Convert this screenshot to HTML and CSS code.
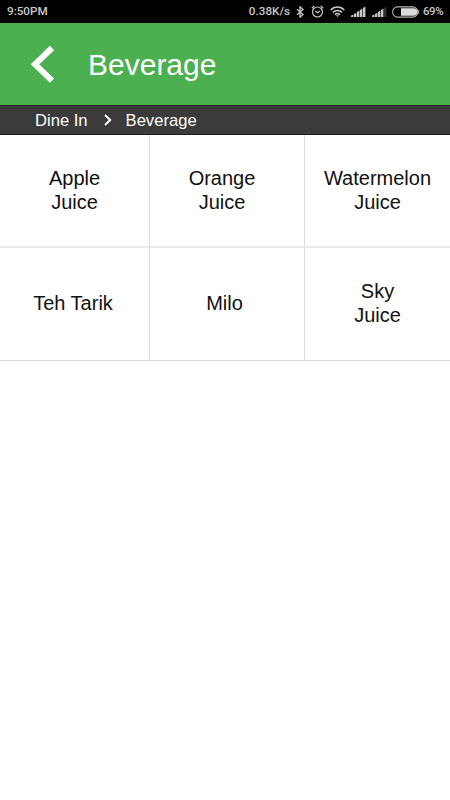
FILE: index.html
```
<!DOCTYPE html>
<html lang="en">

<head>
    <meta charset="UTF-8">
    <meta name="viewport" content="width=device-width, initial-scale=1.0">
    <title>Beverage</title>
    <link rel="stylesheet" href="styles.css">
</head>

<body>
    <!-- status bar -->
    <div class="status">
        <span class="time">9:50PM</span>
        <span class="speed">0.38K/s</span>
        <svg class="bluetooth" width="8" height="12" viewBox="0 0 8 12">
            <path d="M1 3.2L7 8.6L4 11.2V0.8L7 3.4L1 8.8" fill="none" stroke="#c8c8c8" stroke-width="1.3" />
        </svg>
        <svg class="alarm" width="13" height="13" viewBox="0 0 13 13" fill="none" stroke="#c8c8c8" stroke-width="1.2">
            <circle cx="6.5" cy="7" r="5" />
            <path d="M0.8 3.2L3.2 1M12.2 3.2L9.8 1M4.3 6L6.5 7.8L9 6" />
        </svg>
        <svg class="wifi" width="15" height="11" viewBox="0 0 15 11" fill="none" stroke="#c8c8c8" stroke-width="1.5">
            <path d="M0.7 4C4.5 0 10.5 0 14.3 4M2.9 6.4C5.5 3.8 9.5 3.8 12.1 6.4M5 8.6C6.5 7.2 8.5 7.2 10 8.6" />
            <path d="M6 9.3L7.5 11L9 9.3Z" fill="#c8c8c8" stroke="none" />
        </svg>
        <svg class="signal" width="15" height="11" viewBox="0 0 15 11" fill="#c8c8c8">
            <path d="M0 9.5L2.4 8.5V11H0zM3 8L5.4 6.8V11H3zM6 6L8.4 4.6V11H6zM9 4L11.4 2.6V11H9zM12 2L14.4 0.6V11H12z" />
        </svg>
        <svg class="signal" width="15" height="11" viewBox="0 0 15 11" fill="#c8c8c8">
            <path d="M0 9.5L2.4 8.5V11H0zM3 8L5.4 6.8V11H3zM6 6L8.4 4.6V11H6zM9 4L11.4 2.6V11H9z" />
            <path d="M12 2L14.4 0.6V11H12z" fill="#303030" />
        </svg>
        <svg class="battery" width="28" height="12" viewBox="0 0 28 12">
            <rect x="0.6" y="0.9" width="25.2" height="10.2" rx="5" fill="none" stroke="#b4b4b4" stroke-width="1.1" />
            <path d="M9 2.3H21.5A3.7 3.7 0 0 1 21.5 9.7H9Z" fill="#dcdcdc" />
            <path d="M26.7 4.2V7.8" stroke="#b4b4b4" stroke-width="1" />
        </svg>
        <span class="percent">69%</span>
    </div>

    <!-- title bar -->
    <div class="header">
        <svg class="back" width="24" height="38" viewBox="0 0 24 38">
            <path d="M21 3L4 19.3L21 35.6" fill="none" stroke="#fff" stroke-width="6" />
        </svg>
        <h1>Beverage</h1>
    </div>

    <div class="crumbs">
        <span>Dine In</span>
        <svg class="arrow" width="8" height="12" viewBox="0 0 8 12">
            <path d="M1 1L6.2 6L1 11" fill="none" stroke="#fff" stroke-width="2" />
        </svg>
        <span>Beverage</span>
    </div>

    <!-- menu items -->
    <div class="menu">
        <div class="item">Apple<br>Juice</div>
        <div class="item orange">Orange<br>Juice</div>
        <div class="item">Watermelon<br>Juice</div>
        <div class="item teh">Teh Tarik</div>
        <div class="item milo">Milo</div>
        <div class="item">Sky<br>Juice</div>
    </div>
</body>

</html>
```

FILE: styles.css
```
* {
    margin: 0;
    padding: 0;
    box-sizing: border-box;
}

body {
    background-color: #fff;
    font-family: "Liberation Sans", Arial, sans-serif;
}

.status {
    display: flex;
    align-items: center;
    height: 23px;
    padding: 0 7px;
    background-color: #000;
    color: #c8c8c8;
    font: 500 11.7px/23px Roboto, sans-serif;
}

.status svg {
    flex: none;
}

.time {
    margin-right: auto;
}

.bluetooth {
    margin-left: 6px;
}

.alarm {
    margin-left: 7px;
}

.wifi {
    margin-left: 6px;
}

.signal {
    margin-left: 6px;
}

.battery {
    margin-left: 5px;
}

.percent {
    width: 20px;
    margin-left: 3px;
    font-size: 11.4px;
    letter-spacing: -0.4px;
}

.header {
    display: flex;
    align-items: center;
    height: 82px;
    padding-left: 31px;
    background-color: #4caf50;
    color: #fff;
}

.header h1 {
    margin-left: 33px;
    padding-top: 2px;
    font-size: 30px;
    font-weight: normal;
}

.crumbs {
    display: flex;
    align-items: center;
    height: 30px;
    padding-left: 35px;
    background-color: #3b3b3b;
    border-top: 1px solid #1c1c1c;
    border-bottom: 1px solid #1c1c1c;
    color: #fff;
    font-size: 16.6px;
}

.crumbs span {
    padding-top: 1px;
}

.arrow {
    margin: 0 14px 0 16px;
}

.menu {
    display: grid;
    grid-template-columns: 150px 155px 145px;
    grid-template-rows: 113px 113px;
}

.item {
    display: flex;
    align-items: center;
    justify-content: center;
    padding-bottom: 2px;
    border-right: 1px solid #dedede;
    border-bottom: 2px solid #e9e9e9;
    color: #111;
    font-size: 20px;
    line-height: 24px;
    text-align: center;
}

.item:nth-child(3n) {
    border-right: none;
}

.item:nth-child(n+4) {
    padding-bottom: 3px;
    border-bottom: 1px solid #dedede;
}

.orange {
    padding-right: 10px;
}

.milo {
    padding-right: 5px;
}

.teh {
    padding-right: 3px;
}
```
